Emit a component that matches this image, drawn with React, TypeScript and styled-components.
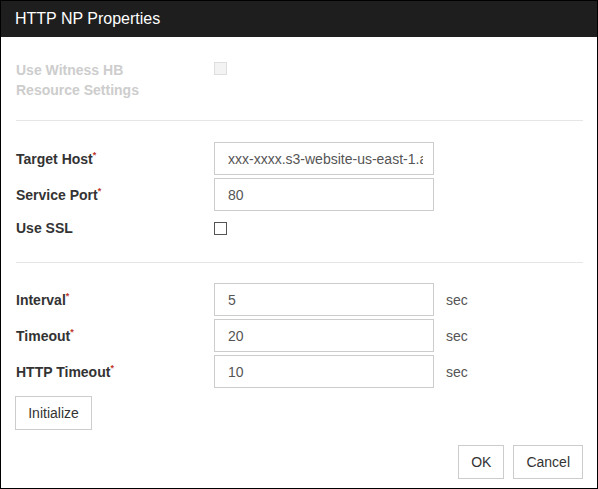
import React from "react"
import styled, { createGlobalStyle } from "styled-components"

const GlobalStyle = createGlobalStyle`
  html, body {
    margin: 0;
    padding: 0;
    background: #fff;
  }
  body {
    font-family: "Liberation Sans", Arial, sans-serif;
  }
`

const Frame = styled.div`
  box-sizing: border-box;
  width: 598px;
  height: 489px;
  border: 1px solid #000;
  background: #fff;
  display: flex;
  flex-direction: column;
`

const Header = styled.div`
  height: 36px;
  flex: none;
  background: #1e1e1e;
  color: #fff;
  font-size: 16px;
  line-height: 36px;
  padding-left: 14px;
`

const Body = styled.div`
  flex: 1;
  display: flex;
  flex-direction: column;
  padding: 0 14px 9px 14px;
`

const Section = styled.div<{ top: number; bottom: number }>`
  display: flex;
  flex-direction: column;
  gap: 3px;
  padding-top: ${(p) => p.top}px;
  padding-bottom: ${(p) => p.bottom}px;
`

const Divider = styled.hr`
  margin: 0 0 0 1px;
  border: none;
  border-top: 1px solid #e6e6e6;
  height: 0;
`

const Row = styled.div<{ align?: string }>`
  display: grid;
  grid-template-columns: 199px auto auto;
  justify-content: start;
  align-items: ${(p) => p.align || "center"};
`

const Label = styled.label<{ disabled?: boolean }>`
  padding-left: 1px;
  font-size: 14px;
  font-weight: bold;
  line-height: 20px;
  color: ${(p) => (p.disabled ? "#cdcdcd" : "#333")};
`

const Required = styled.sup`
  color: #c0392b;
  font-size: 9px;
  font-weight: bold;
  vertical-align: top;
  line-height: 9px;
  position: relative;
  top: 2px;
`

const TextInput = styled.input`
  box-sizing: border-box;
  width: 220px;
  height: 33px;
  border: 1px solid #cccccc;
  padding: 0 10px 0 13px;
  font-family: "Liberation Sans", Arial, sans-serif;
  font-size: 14px;
  color: #555;
  background: #fff;
  outline: none;
`

const CheckBox = styled.input<{ offset?: number }>`
  appearance: none;
  box-sizing: border-box;
  width: 13px;
  height: 13px;
  margin: ${(p) => p.offset || 0}px 0 0 0;
  border: 1px solid ${(p) => (p.disabled ? "#dedede" : "#555")};
  background: ${(p) => (p.disabled ? "#f3f3f3" : "#fff")};
  border-radius: 0;
`

const Unit = styled.span`
  margin-left: 12px;
  font-size: 14px;
  color: #555;
`

const Button = styled.button`
  box-sizing: border-box;
  height: 34px;
  padding: 0 12px;
  border: 1px solid #cccccc;
  background: #fff;
  font-family: "Liberation Sans", Arial, sans-serif;
  font-size: 14px;
  color: #333;
`

const InitButton = styled(Button)`
  align-self: flex-start;
  width: 77px;
  margin-top: 8px;
`

const Footer = styled.div`
  margin-top: auto;
  display: flex;
  justify-content: flex-end;
  gap: 9px;
`

type Field = { label: string; value: string; unit?: string }

const targetFields: Field[] = [
  { label: "Target Host", value: "xxx-xxxx.s3-website-us-east-1.amazonaws.com" },
  { label: "Service Port", value: "80" },
]

const timeFields: Field[] = [
  { label: "Interval", value: "5", unit: "sec" },
  { label: "Timeout", value: "20", unit: "sec" },
  { label: "HTTP Timeout", value: "10", unit: "sec" },
]

function FieldRow({ f }: { f: Field }) {
  return (
    <Row>
      <Label>
        {f.label}
        <Required>*</Required>
      </Label>
      <TextInput defaultValue={f.value} />
      {f.unit && <Unit>{f.unit}</Unit>}
    </Row>
  )
}

export default function App() {
  return (
    <>
      <GlobalStyle />
      <Frame>
        <Header>HTTP NP Properties</Header>
        <Body>
          <Section top={23} bottom={20}>
            <Row align="start">
              <Label disabled>
                Use Witness HB
                <br />
                Resource Settings
              </Label>
              <CheckBox type="checkbox" disabled offset={2} />
            </Row>
          </Section>
          <Divider />
          <Section top={21} bottom={0}>
            {targetFields.map((f) => (
              <FieldRow key={f.label} f={f} />
            ))}
          </Section>
          <Section top={7} bottom={24}>
            <Row>
              <Label>Use SSL</Label>
              <CheckBox type="checkbox" />
            </Row>
          </Section>
          <Divider />
          <Section top={20} bottom={0}>
            {timeFields.map((f) => (
              <FieldRow key={f.label} f={f} />
            ))}
          </Section>
          <InitButton>Initialize</InitButton>
          <Footer>
            <Button>OK</Button>
            <Button>Cancel</Button>
          </Footer>
        </Body>
      </Frame>
    </>
  )
}
